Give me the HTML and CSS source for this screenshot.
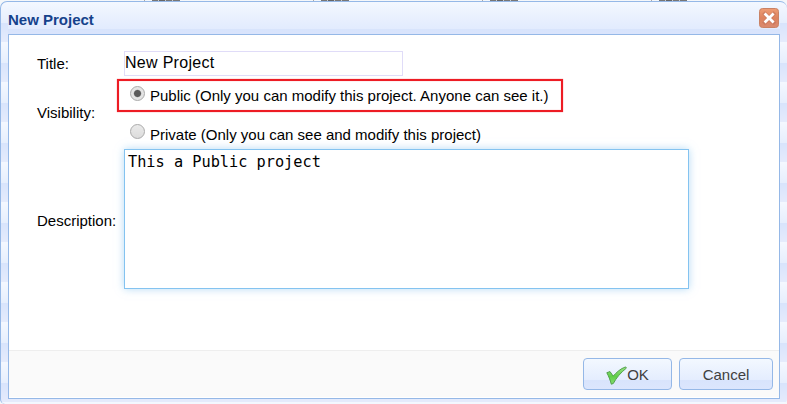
FILE: index.html
```
<!DOCTYPE html>
<html lang="en">
<head>
<meta charset="utf-8">
<title>New Project</title>
<link rel="stylesheet" href="styles.css">
</head>
<body>
<div class="backdrop"><i></i><i></i><i></i><i></i></div>
<section class="dialog">
  <header class="header">
    <h1>New Project</h1>
    <button class="close" aria-label="Close">
      <svg width="20" height="20" viewBox="0 0 20 20">
        <defs><linearGradient id="orange" x2="0" y2="1"><stop stop-color="#ef9d74"/><stop offset=".5" stop-color="#dd835e"/><stop offset="1" stop-color="#db8a70"/></linearGradient></defs>
        <rect x=".5" y=".5" width="19" height="19" rx="3" fill="url(#orange)" stroke="#c98265"/>
        <path d="M6 6l8.4 8.4M14.4 6L6 14.4" stroke="#b96d58" stroke-width="4.2" stroke-linecap="square" opacity=".45"/>
        <path d="M6.600 6.600l7 7M13.600 6.600l-7 7" stroke="#fff" stroke-width="2.800" stroke-linecap="square"/>
      </svg>
    </button>
  </header>
  <div class="body">
    <form class="form">
      <label class="label" for="title">Title:</label>
      <input class="title" id="title" value="New Project">
      <span class="label">Visibility:</span>
      <div class="options">
        <label class="option marked"><span class="radio on"></span><span>Public (Only you can modify this project. Anyone can see it.)</span></label>
        <label class="option"><span class="radio"></span><span class="text">Private (Only you can see and modify this project)</span></label>
      </div>
      <label class="label low" for="description">Description:</label>
      <textarea class="description" id="description" spellcheck="false">This a Public project</textarea>
    </form>
    <footer class="footer">
      <button class="button ok"><svg width="21" height="19" viewBox="0 0 21 19">
        <defs><linearGradient id="green" x2="0" y2="1"><stop stop-color="#9be287"/><stop offset=".55" stop-color="#5fce48"/><stop offset="1" stop-color="#84dc70"/></linearGradient></defs>
        <path d="M.8 6.7L4 5.600l3.200 4.500C10.500 6.300 14.500 2.600 19.600.9l.8 1.200C15 6.400 10.400 11.600 7.300 17.500l-2 .7C4.200 14 2.600 10 .8 6.700z" fill="url(#green)" stroke="#4a9a42" stroke-width=".9" stroke-linejoin="round"/>
      </svg><span>OK</span></button>
      <button class="button cancel">Cancel</button>
    </footer>
  </div>
</section>
</body>
</html>
```
FILE: styles.css
```
* { box-sizing: border-box; }
body {
  margin: 0;
  height: 404px;
  overflow: hidden;
  background: #f4f7fa;
  font-family: "Liberation Sans", Arial, sans-serif;
  color: #000;
}
.backdrop {
  height: 1px;
  padding-left: 144px;
  display: flex;
  gap: 132px;
}
.backdrop i {
  width: 37px;
  height: 1px;
  flex: none;
  background: linear-gradient(90deg, #aaa 1px, transparent 1px 8px, #777 8px 14px, #ccc 14px 15px, #666 15px 21px, #ccc 21px 22px, #777 22px 28px, #ccc 28px 29px, #777 29px 36px, transparent 36px);
}
.dialog {
  height: 403px;
  padding: 0 7px 5px;
  border: 1px solid #95b8e7;
  border-right-width: 0;
  border-bottom: 0;
  border-radius: 7px 7px 5px 5px;
  background: linear-gradient(#f4f8ff 0, #e6eefd 21px, #d8e4fc 21px, #e5ebfc 40px) 0 0 / 100% 40px;
}
.header {
  height: 32px;
  display: flex;
  justify-content: space-between;
  background: linear-gradient(#f3f8ff 0, #edf3fe 9px, #e2ebfe 27px, #d8e4fc 27px, #dae4fc 32px);
}
.header h1 {
  margin: 9px 0 0;
  font-size: 15px;
  line-height: 18px;
  color: #15428b;
}
.close {
  margin: 6px 1px 0 0;
  padding: 0;
  width: 20px;
  height: 20px;
  border: 0;
  background: none;
}
.close svg { display: block; }
.body {
  width: 772px;
  height: 365px;
  border: 1px solid #95b8e7;
  background: #fff;
  display: flex;
  flex-direction: column;
}
.form {
  height: 315px;
  padding: 16px 0 0 28px;
  display: grid;
  grid-template-columns: 87px 565px;
  grid-template-rows: 25px 73px 140px;
  align-items: center;
  font-size: 15px;
}
.low { padding-top: 2px; }
.title {
  width: 279px;
  height: 25px;
  border: 1px solid #e0dcf8;
  padding: 0 0 2px;
  font: 16px "Liberation Sans", Arial, sans-serif;
  letter-spacing: .3px;
  outline: 0;
}
.options {
  align-self: start;
  padding-top: 3px;
}
.option {
  height: 32px;
  display: flex;
  align-items: flex-start;
  padding: 6px 0 0 6px;
  line-height: 20px;
}
.text { padding-top: 1px; }
.marked {
  width: 446px;
  height: 33px;
  margin: 0 0 6px -7px;
  padding: 5px 0 0 11px;
  border: 2px solid #ed1c24;
  box-shadow: 0 0 1px #ed1c2499, inset 0 0 1px #ed1c2499;
}
.radio {
  width: 15px;
  height: 15px;
  margin-right: 5px;
  border: 1px solid #aaa;
  border-radius: 50%;
  background: linear-gradient(#eaeaea, #dcdcdc);
  flex: none;
}
.on {
  background: radial-gradient(circle, #5b5b5b 3px, #e4e4e4 4.2px);
}
.description {
  width: 565px;
  height: 140px;
  resize: none;
  outline: 0;
  padding: 3px;
  border: 1px solid #84c3f0;
  box-shadow: 0 0 8px #84c3f099;
  font: 15.25px/19px "DejaVu Sans Mono", monospace;
}
.footer {
  height: 47px;
  border-top: 1px solid #eee;
  background: #fafafa;
  display: flex;
  justify-content: flex-end;
  gap: 7px;
  padding: 7px 6px 0 0;
}
.button {
  height: 32px;
  display: flex;
  align-items: center;
  justify-content: center;
  border: 1px solid #95b8e7;
  border-radius: 4px;
  background: linear-gradient(#f3f8ff 0, #e4edfe 21px, #d8e4fc 21px, #dce6fd 100%);
  font: 15px "Liberation Sans", Arial, sans-serif;
  color: #404040;
  padding: 0;
}
.ok { width: 89px; }
.ok svg { margin-top: 2px; }
.cancel { width: 94px; }
```
